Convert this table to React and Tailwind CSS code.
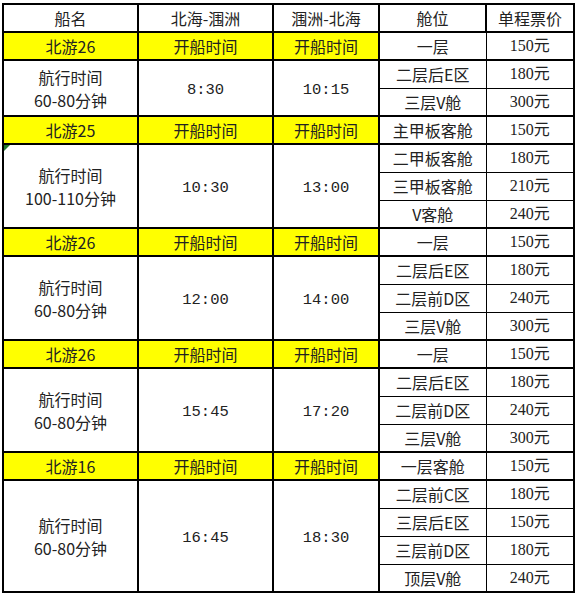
import React from 'react';

const groups = [
  {
    name: '北游26', go: '8:30', back: '10:15', dur: '60-80分钟',
    cabins: [['一层', '150元'], ['二层后E区', '180元'], ['三层V舱', '300元']],
  },
  {
    name: '北游25', go: '10:30', back: '13:00', dur: '100-110分钟', mark: true,
    cabins: [['主甲板客舱', '150元'], ['二甲板客舱', '180元'], ['三甲板客舱', '210元'], ['V客舱', '240元']],
  },
  {
    name: '北游26', go: '12:00', back: '14:00', dur: '60-80分钟',
    cabins: [['一层', '150元'], ['二层后E区', '180元'], ['二层前D区', '240元'], ['三层V舱', '300元']],
  },
  {
    name: '北游26', go: '15:45', back: '17:20', dur: '60-80分钟',
    cabins: [['一层', '150元'], ['二层后E区', '180元'], ['二层前D区', '240元'], ['三层V舱', '300元']],
  },
  {
    name: '北游16', go: '16:45', back: '18:30', dur: '60-80分钟',
    cabins: [['一层客舱', '150元'], ['二层前C区', '180元'], ['三层后E区', '150元'], ['三层前D区', '180元'], ['顶层V舱', '240元']],
  },
];

const cjk = "font-['Noto_Sans_CJK_SC',sans-serif]";
const price = "font-['Liberation_Serif','Noto_Sans_CJK_SC',serif]";
const mono = "font-['Liberation_Mono',monospace]";

export default function App() {
  return (
    <div className="bg-white w-[577px] h-[595px] pt-[3px] pl-[2px]">
      <table className={`table-fixed border-collapse w-[571px] border-2 border-black text-[16px] leading-none text-[#222] text-center ${cjk}`}>
        <colgroup>
          <col className="w-[135px]" />
          <col className="w-[135px]" />
          <col className="w-[106px]" />
          <col className="w-[107px]" />
          <col className="w-[88px]" />
        </colgroup>
        <thead>
          <tr className="h-[28px]">
            <th className="border-2 border-black font-normal">船名</th>
            <th className="border-2 border-black font-normal">北海-涠洲</th>
            <th className="border-2 border-black font-normal">涠洲-北海</th>
            <th className="border-2 border-black font-normal">舱位</th>
            <th className="border-2 border-black font-normal">单程票价</th>
          </tr>
        </thead>
        <tbody>
          {groups.map((g, gi) => (
            <React.Fragment key={gi}>
              <tr className="h-[28px]">
                <td className="border-2 border-black bg-[#ffff00]">{g.name}</td>
                <td className="border-2 border-black bg-[#ffff00]">开船时间</td>
                <td className="border-2 border-black bg-[#ffff00]">开船时间</td>
                <td className="border border-black border-y-2 border-l-2">{g.cabins[0][0]}</td>
                <td className={`border border-black border-y-2 ${price}`}>{g.cabins[0][1]}</td>
              </tr>
              {g.cabins.slice(1).map((c, ci) => (
                <tr key={ci} className="h-[28px]">
                  {ci === 0 && (
                    <>
                      <td rowSpan={g.cabins.length - 1} className="relative border-2 border-black leading-[23px] pt-[1px]">
                        {g.mark && (
                          <span className="absolute left-0 top-0 w-0 h-0 border-t-[6px] border-r-[6px] border-t-[#1f7a2e] border-r-transparent" />
                        )}
                        <div>航行时间</div>
                        <div>{g.dur}</div>
                      </td>
                      <td rowSpan={g.cabins.length - 1} className={`border-2 border-black ${mono} text-[15.5px] pt-[5px]`}>{g.go}</td>
                      <td rowSpan={g.cabins.length - 1} className={`border-2 border-black ${mono} text-[15.5px] pt-[5px]`}>{g.back}</td>
                    </>
                  )}
                  <td className="border border-black border-l-2">{c[0]}</td>
                  <td className={`border border-black ${price}`}>{c[1]}</td>
                </tr>
              ))}
            </React.Fragment>
          ))}
        </tbody>
      </table>
    </div>
  );
}
